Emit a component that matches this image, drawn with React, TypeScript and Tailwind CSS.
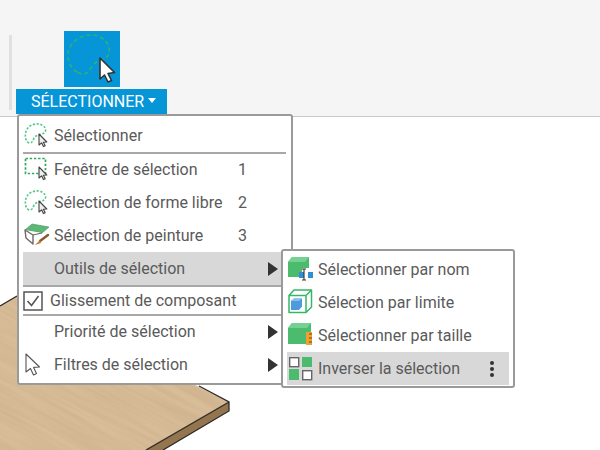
import type { ReactNode } from "react";

const Cursor = ({ x, y }: { x: number; y: number }) => (
    <path
        transform={`translate(${x} ${y})`}
        d="M0 0 L0 11 L2.6 8.8 L4.4 12.6 L6.2 11.8 L4.4 8.2 L7.8 8 Z"
        fill="#eee"
        stroke="#444"
        strokeWidth="1.1"
        strokeLinejoin="round"
    />
);

const LassoIcon = () => (
    <svg width="28" height="26" viewBox="0 0 28 26">
        <path
            d="M6 20 C2 18 1.5 12 3.5 7 C6 2 12 0.5 16 1 C21 2 24 6 22 9 C20 12 14 11 11 15 C10 18 9 20 6 20 Z"
            fill="none"
            stroke="#55c886"
            strokeWidth="1.6"
            strokeDasharray="2.2 1.6"
        />
        <Cursor x={16} y={11} />
    </svg>
);

const WindowIcon = () => (
    <svg width="28" height="26" viewBox="0 0 28 26">
        <rect x="2.5" y="1.5" width="20" height="15" fill="none" stroke="#2fa860" strokeWidth="1.7" strokeDasharray="2.4 1.8" />
        <Cursor x={16} y={10} />
    </svg>
);

const PaintIcon = () => (
    <svg width="28" height="26" viewBox="0 0 28 26">
        <path d="M2 7 L9 1 L26 4 L19 10 Z" fill="#5cb874" stroke="#4a8f5e" strokeWidth="0.6" />
        <path d="M2 7 L19 10 L12 14 L5 19 L2 15 Z" fill="#fff" />
        <path d="M2 7 L3 15 L10 21 L10 12 Z" fill="#fff" stroke="#6a6a6a" strokeWidth="1.4" strokeLinejoin="round" />
        <path d="M10 12 L19 10" stroke="#6a6a6a" strokeWidth="1.2" />
        <path d="M25 12 L17 18" stroke="#8a5a2c" strokeWidth="2.4" strokeLinecap="round" />
        <path d="M17 17 L12 22 L18 20 Z" fill="#c17a3a" />
    </svg>
);

const NameIcon = () => (
    <svg width="28" height="26" viewBox="0 0 28 26">
        <path d="M1 5 L5 0 L22 0 L22 11 L15 11 L15 20 L1 20 Z" fill="#4dbb6e" />
        <path d="M1 5 L5 0 L22 0 L18 5 Z" fill="#75d192" />
        <rect x="12" y="15" width="5" height="6" fill="#2f8fd0" />
        <rect x="21" y="15" width="5" height="6" fill="#2f8fd0" />
        <path d="M15 12 H19 M17 12 V23 M15 23 H19" stroke="#333" strokeWidth="1.1" fill="none" />
    </svg>
);

const BoundaryIcon = () => (
    <svg width="28" height="26" viewBox="0 0 28 26" className="overflow-visible">
        <path d="M2 5.5 L7 0 L24.5 0 L24.5 17 L19 22.5 L2 22.5 Z M2 5.5 L19 5.5 L24.5 0 M19 5.5 L19 22.5" fill="none" stroke="#35b765" strokeWidth="1.5" strokeLinejoin="round" />
        <path d="M4 11 L7 8.5 L15 8.5 L15 16.5 L12 20 L4 20 Z" fill="#4e9bdb" />
        <path d="M4 11 L7 8.5 L15 8.5 L12 11 Z" fill="#86bfea" />
    </svg>
);

const SizeIcon = () => (
    <svg width="28" height="26" viewBox="0 0 28 26">
        <path d="M1 5 L5 0 L24 0 L24 21 L1 21 Z" fill="#4dbb6e" />
        <path d="M1 5 L5 0 L24 0 L20 5 Z" fill="#75d192" />
        <rect x="19" y="9" width="6" height="13" fill="#f0a030" />
        <path d="M22 11 H25 M22 15 H25 M22 19 H25" stroke="#6b4a12" strokeWidth="1.2" />
    </svg>
);

const InvertIcon = () => (
    <svg width="28" height="26" viewBox="0 0 28 26">
        <rect x="2.7" y="1.7" width="9" height="9" fill="#fff" stroke="#666" strokeWidth="1.4" />
        <rect x="15" y="1" width="10" height="10" fill="#4dbb6e" />
        <rect x="2" y="13" width="10" height="11" fill="#4dbb6e" />
        <rect x="15.7" y="14.7" width="9" height="9" fill="#fff" stroke="#666" strokeWidth="1.4" />
    </svg>
);

const CheckIcon = () => (
    <svg width="20" height="20" viewBox="0 0 20 20">
        <rect x="1" y="1" width="18" height="18" fill="#fff" stroke="#555" strokeWidth="1.5" />
        <path d="M4.5 10 L8.5 14.5 L15.5 5" fill="none" stroke="#555" strokeWidth="1.6" />
    </svg>
);

const ArrowCursor = () => (
    <svg width="22" height="26" viewBox="0 0 22 26">
        <path d="M3 2 L3 20 L7.5 16.5 L10.5 23 L13.5 21.5 L10.6 15.4 L16.5 15 Z" fill="#fff" stroke="#555" strokeWidth="1.1" strokeLinejoin="round" />
    </svg>
);

interface RowProps {
    icon?: ReactNode;
    label: string;
    shortcut?: string;
    arrow?: boolean;
    active?: boolean;
    height: string;
    narrowIcon?: boolean;
}

function Row({ icon, label, shortcut, arrow, active, height, narrowIcon }: RowProps) {
    return (
        <div className={`flex items-center ${height} ${active ? "bg-[#d8d8d8]" : ""}`}>
            <div className={`${narrowIcon ? "w-[27px]" : "w-[31px]"} shrink-0 flex items-center justify-start`}>{icon}</div>
            <span className="text-[16px] text-[#5a5a5a] whitespace-nowrap">{label}</span>
            {shortcut && <span className="absolute left-[215px] text-[16px] text-[#5a5a5a]">{shortcut}</span>}
            {arrow && (
                <span className="ml-auto mr-[8px] w-0 h-0 border-y-[7px] border-y-transparent border-l-[10px] border-l-[#333]" />
            )}
        </div>
    );
}

function SubRow({ icon, label, active }: { icon: ReactNode; label: string; active?: boolean }) {
    return (
        <div className={`flex items-center h-[33px] ${active ? "bg-[#d8d8d8]" : ""}`}>
            <div className="w-[31px] shrink-0 flex items-center">{icon}</div>
            <span className="text-[16px] text-[#5a5a5a] whitespace-nowrap">{label}</span>
            {active && (
                <div className="ml-auto mr-[15px] flex flex-col gap-[2px]">
                    <span className="w-[4px] h-[4px] rounded-full bg-[#333]" />
                    <span className="w-[4px] h-[4px] rounded-full bg-[#333]" />
                    <span className="w-[4px] h-[4px] rounded-full bg-[#333]" />
                </div>
            )}
        </div>
    );
}

export default function App() {
    return (
        <div className="relative w-[600px] h-[450px] overflow-hidden bg-white font-['Roboto',sans-serif]">
            {/* Wood plank on the canvas */}
            <svg className="absolute left-0 top-0" width="600" height="450" viewBox="0 0 600 450">
                <defs>
                    <filter id="grain" x="0" y="0" width="100%" height="100%">
                        <feTurbulence type="fractalNoise" baseFrequency="0.012 0.22" numOctaves="3" seed="4" />
                        <feColorMatrix values="0 0 0 0 0.62  0 0 0 0 0.45  0 0 0 0 0.27  1.6 0 0 0 -0.45" />
                    </filter>
                    <clipPath id="top-face">
                        <path d="M0 306 L17 296 L229 402 L146 450 L0 450 Z" />
                    </clipPath>
                </defs>
                <path d="M0 306 L17 296 L229 402 L146 450 L0 450 Z" fill="#d8bd98" />
                <g clipPath="url(#top-face)">
                    <rect x="-100" y="150" width="500" height="400" transform="rotate(28 100 350)" filter="url(#grain)" />
                </g>
                <path d="M229 402 L229 411 L163 450 L146 450 Z" fill="#93764f" />
                <path d="M0 306 L17 296 M199 386 L229 402 L229 411 L163 450 M229 402 L146 450" fill="none" stroke="#2e2a26" strokeWidth="1.3" />
            </svg>

            {/* Toolbar */}
            <div className="relative h-[117px] bg-[#f5f5f5] border-b border-[#c8c8c8] pt-[31px]">
                <div className="flex pl-[9px]">
                    <div className="w-[3px] h-[75px] mt-[4px] bg-[#e0e0e0]" />
                    <div className="ml-[52px] w-[56px] h-[56px] bg-[#0696d7]">
                        <svg width="56" height="56" viewBox="0 0 56 56">
                            <path
                                d="M13 41 C6 37 2 27 5 18 C9 9 19 3 29 4 C40 5 47 14 45 22 C44 29 34 28 29 34 C26 38 24 43 19 43 C17 43 15 42 13 41 Z"
                                fill="none"
                                stroke="#2fb36f"
                                strokeWidth="1.5"
                                strokeDasharray="4 3"
                            />
                            <path d="M36 27 L36 48 L40.5 44 L44 51 L47.5 49.5 L44 42.5 L50.5 41.5 Z" fill="#fff" stroke="#333" strokeWidth="1.6" strokeLinejoin="round" />
                        </svg>
                    </div>
                </div>
                <div className="absolute left-[16px] top-[89px] w-[151px] h-[25px] bg-[#0696d7] flex items-center pl-[15px] gap-[4px] text-white">
                    <span className="text-[16px] whitespace-nowrap">SÉLECTIONNER</span>
                    <span className="w-0 h-0 mb-[2px] border-x-[4px] border-x-transparent border-t-[5px] border-t-white" />
                </div>
            </div>

            {/* Main menu */}
            <div className="absolute left-[17px] top-[114px] w-[276px] h-[271px] bg-white border-2 border-[#9a9a9a] rounded-[3px] pt-[3px] pl-[4px] pr-[5px]">
                <div className="relative">
                    <Row height="h-[33px]" icon={<LassoIcon />} label="Sélectionner" />
                    <div className="h-[2px] bg-[#a8a8a8]" />
                    <Row height="h-[32px]" icon={<WindowIcon />} label="Fenêtre de sélection" shortcut="1" />
                    <Row height="h-[33px]" icon={<LassoIcon />} label="Sélection de forme libre" shortcut="2" />
                    <Row height="h-[33px]" icon={<PaintIcon />} label="Sélection de peinture" shortcut="3" />
                    <Row height="h-[33px]" label="Outils de sélection" arrow active />
                    <div className="h-[2px] bg-[#a8a8a8]" />
                    <Row height="h-[27px]" icon={<CheckIcon />} label="Glissement de composant" narrowIcon />
                    <div className="h-[2px] bg-[#a8a8a8]" />
                    <Row height="h-[32px]" label="Priorité de sélection" arrow />
                    <Row height="h-[33px]" icon={<ArrowCursor />} label="Filtres de sélection" arrow />
                </div>
            </div>

            {/* Submenu */}
            <div className="absolute left-[281px] top-[249px] w-[234px] h-[139px] bg-white border-2 border-[#9a9a9a] rounded-[3px] pt-[2px] px-[4px]">
                <SubRow icon={<NameIcon />} label="Sélectionner par nom" />
                <SubRow icon={<BoundaryIcon />} label="Sélection par limite" />
                <SubRow icon={<SizeIcon />} label="Sélectionner par taille" />
                <SubRow icon={<InvertIcon />} label="Inverser la sélection" active />
            </div>
        </div>
    );
}
